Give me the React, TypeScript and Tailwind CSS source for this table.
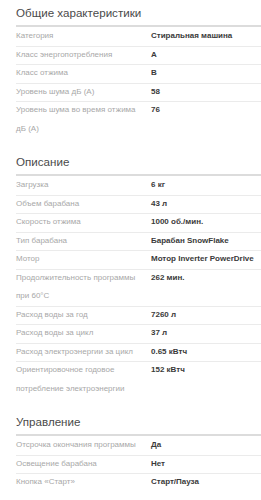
import React from 'react';

type Spec = { label: string; value: string };

const sections: { title: string; rows: Spec[] }[] = [
  {
    title: 'Общие характеристики',
    rows: [
      { label: 'Категория', value: 'Стиральная машина' },
      { label: 'Класс энергопотребления', value: 'A' },
      { label: 'Класс отжима', value: 'B' },
      { label: 'Уровень шума дБ (А)', value: '58' },
      { label: 'Уровень шума во время отжима дБ (А)', value: '76' },
    ],
  },
  {
    title: 'Описание',
    rows: [
      { label: 'Загрузка', value: '6 кг' },
      { label: 'Объем барабана', value: '43 л' },
      { label: 'Скорость отжима', value: '1000 об./мин.' },
      { label: 'Тип барабана', value: 'Барабан SnowFlake' },
      { label: 'Мотор', value: 'Мотор Inverter PowerDrive' },
      { label: 'Продолжительность программы при 60°C', value: '262 мин.' },
      { label: 'Расход воды за год', value: '7260 л' },
      { label: 'Расход воды за цикл', value: '37 л' },
      { label: 'Расход электроэнергии за цикл', value: '0.65 кВтч' },
      { label: 'Ориентировочное годовое потребление электроэнергии', value: '152 кВтч' },
    ],
  },
  {
    title: 'Управление',
    rows: [
      { label: 'Отсрочка окончания программы', value: 'Да' },
      { label: 'Освещение барабана', value: 'Нет' },
      { label: 'Кнопка «Старт»', value: 'Старт/Пауза' },
    ],
  },
];

export default function App() {
  return (
    <div className="min-h-[500px] w-[261px] bg-white pt-px pl-4 font-['Liberation_Sans',Arial,sans-serif]">
      {sections.map((section, i) => (
        <div key={section.title} className={i === 0 ? '' : 'mt-[12px]'}>
          {/* Section title */}
          <h2 className="border-b-2 border-[#dcdcdc] pt-[4px] pb-[4px] text-[11.6px] leading-[16px] font-normal text-[#4a4a4a]">
            {section.title}
          </h2>
          <div>
            {section.rows.map((row, j) => (
              <div
                key={row.label}
                className={
                  'grid grid-cols-[135px_1fr] text-[8px] leading-[18.5px] ' +
                  (j === 0 ? '' : 'shadow-[inset_0_1px_0_#ebebeb]')
                }
              >
                <div className="pr-[8px] text-[#a8a8a8]">{row.label}</div>
                <div className="font-bold text-[#3a3a3a]">{row.value}</div>
              </div>
            ))}
          </div>
        </div>
      ))}
    </div>
  );
}
